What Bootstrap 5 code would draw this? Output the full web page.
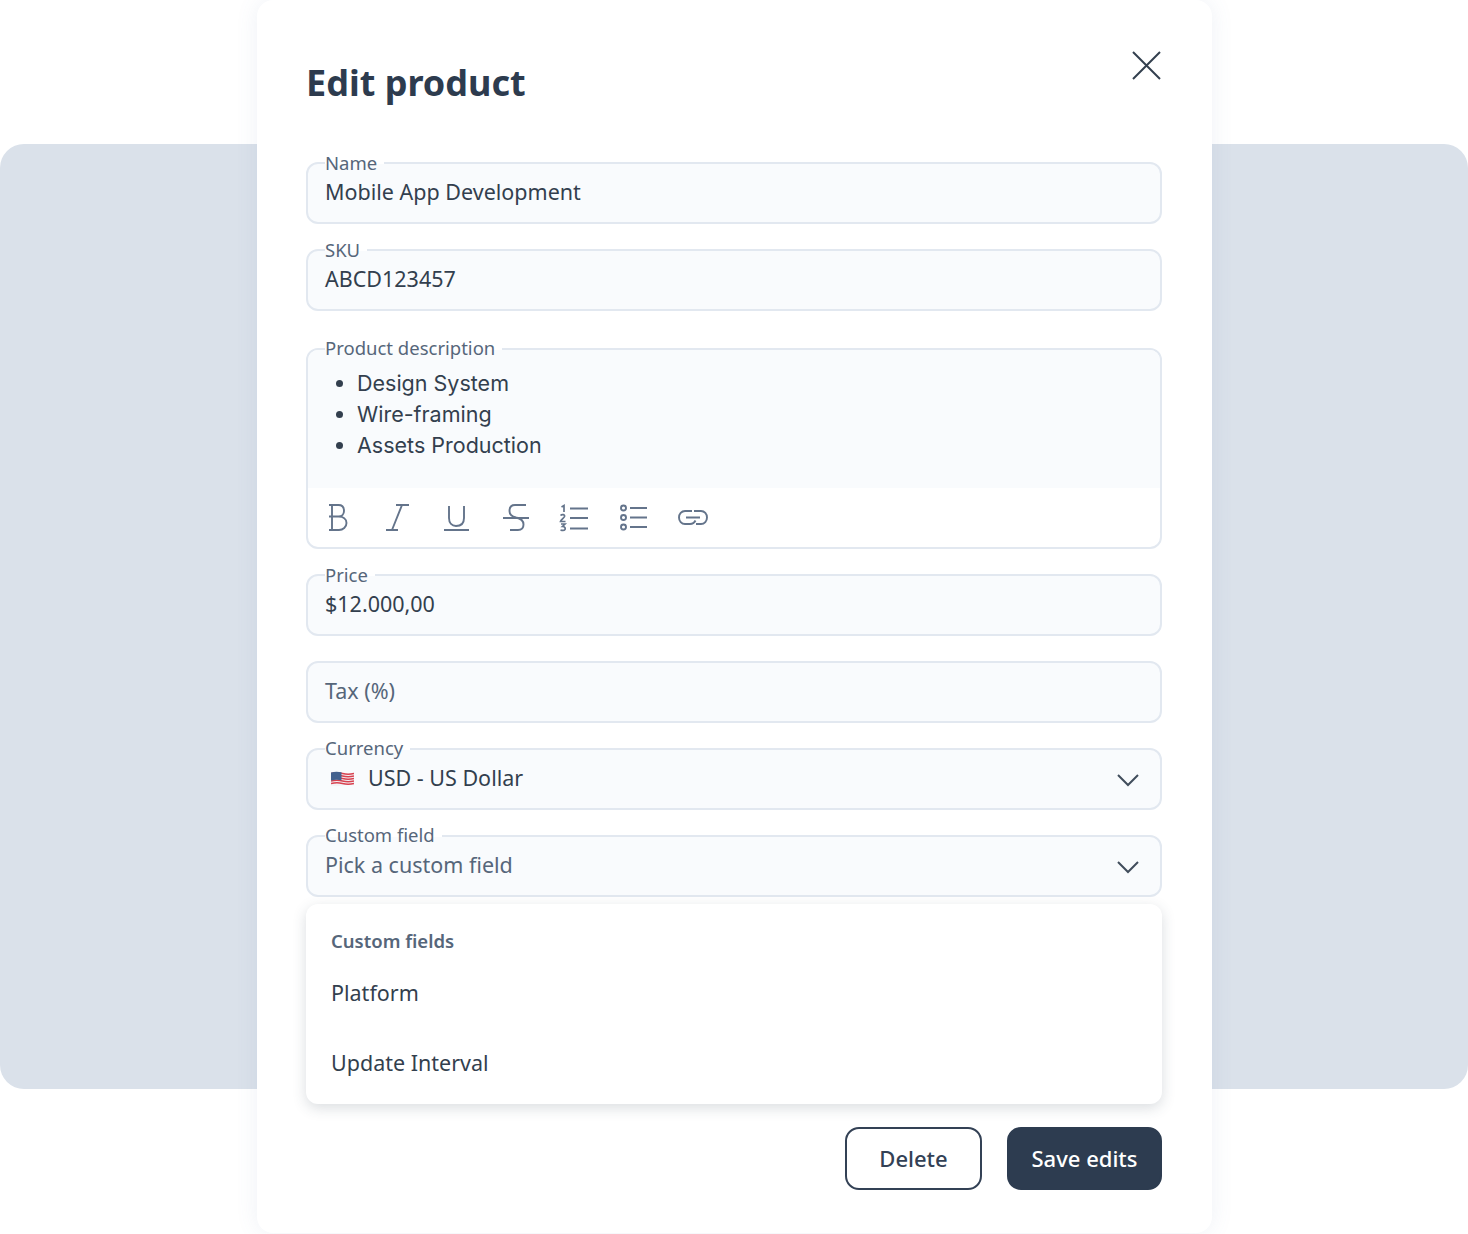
<!DOCTYPE html>
<html lang="en">

<head>
  <meta charset="utf-8">
  <meta name="viewport" content="width=device-width, initial-scale=1.0">
  <title>Edit product</title>
  <link href="https://cdn.jsdelivr.net/npm/bootstrap@5.3.3/dist/css/bootstrap.min.css" rel="stylesheet">
  <style>
    html, body {
      height: 1234px;
      overflow: hidden;
    }

    body {
      position: relative;
      background-color: #fff;
      color: #333f4e;
      font-family: "Noto Sans", sans-serif;
    }

    .backdrop-panel {
      position: absolute;
      left: 0;
      right: 0;
      top: 144px;
      height: 945px;
      background-color: #dae1ea;
      border-radius: 24px;
    }

    .edit-modal {
      position: relative;
      width: 955px;
      height: 1233px;
      margin-left: 257px;
      padding: 0 50px 0 49px;
      background-color: #fff;
      border-radius: 16px;
      box-shadow: 0 0 22px rgba(90, 120, 170, .1);
    }

    .modal-head {
      height: 162px;
      padding-top: 60px;
    }

    .modal-heading {
      margin: 0;
      color: #2d3b4e;
      font-size: 36px;
      line-height: 46px;
      font-weight: 700;
    }

    .close-btn {
      width: 30px;
      height: 30px;
      margin-top: -10px;
      padding: 0;
      border: 0;
      background: none;
      line-height: 0;
    }

    .field-box {
      position: relative;
      height: 62px;
      margin-bottom: 25px;
      padding: 0 20px 0 17px;
      background-color: #f9fbfd;
      border: 2px solid #e2e8f0;
      border-radius: 12px;
      font-size: 21.5px;
      color: #333f4e;
    }

    .field-box .field-value {
      line-height: 57px;
      margin-top: -1px;
    }

    .field-box.d-flex .field-value {
      margin-top: -3px;
    }

    .field-label {
      position: absolute;
      left: 17px;
      top: -12px;
      padding-right: 7px;
      font-size: 18.500px;
      line-height: 22px;
      color: #56667a;
      background: linear-gradient(#fff 0 12px, #f9fbfd 12px);
    }

    .desc-box .field-label,
    .field-box.d-flex .field-label {
      top: -13px;
      background: linear-gradient(#fff 0 13px, #f9fbfd 13px);
    }

    .muted-value {
      color: #56667a;
    }

    .chevron-icon {
      margin-top: 2px;
    }

    .desc-box {
      height: 201px;
      margin-top: 37px;
      padding: 0;
      background-color: #fff;
    }

    .desc-text {
      height: 138px;
      padding: 18px 0 0 49px;
      margin: 0;
      background-color: #f9fbfd;
      border-radius: 10px 10px 0 0;
      font-family: Inter, sans-serif;
      font-size: 21.500px;
      line-height: 31px;
    }

    .desc-tools {
      height: 59px;
      padding-left: 15px;
      gap: 30px;
    }

    .desc-tools svg {
      width: 29px;
      height: 29px;
      fill: none;
      stroke: #64748b;
      stroke-width: 1.900;
    }

    .desc-tools svg.link-icon {
      width: 32px;
    }

    .flag-icon {
      width: 23px;
      height: 16px;
      margin-left: 6px;
      margin-right: 14px;
    }

    .drop-box {
      position: relative;
      height: 200px;
      margin: -18px 0 23px;
      padding-top: 23px;
      padding-left: 25px;
      background-color: #fff;
      border-radius: 12px;
      box-shadow: 0 4px 14px rgba(51, 65, 85, .18);
    }

    .drop-title {
      height: 28px;
      font-size: 18.500px;
      line-height: 27px;
      font-weight: 600;
      color: #56667a;
    }

    .drop-item {
      height: 69px;
      padding-top: 23px;
      font-size: 21.500px;
      line-height: 30px;
      color: #333f4e;
    }

    .drop-item + .drop-item {
      padding-top: 24px;
    }

    .btn-delete,
    .btn-save {
      height: 63px;
      border-radius: 14px;
      font-size: 22px;
      font-weight: 500;
    }

    .btn-delete {
      width: 137px;
      margin-right: 25px;
      background: #fff;
      border: 2px solid #334155;
      color: #334155;
    }

    .btn-save {
      width: 155px;
      background: #2d3c50;
      border: 2px solid #2d3c50;
      color: #fff;
    }
  </style>
</head>

<body>
  <div class="backdrop-panel"></div>

  <div class="edit-modal">
    <div class="modal-head d-flex justify-content-between align-items-start">
      <h1 class="modal-heading">Edit product</h1>
      <button class="close-btn" type="button" aria-label="Close">
        <svg width="30" height="30" viewBox="0 0 30 30" fill="none" stroke="#333f4e" stroke-width="2">
          <path d="M1 2 28 29M28 2 1 29" />
        </svg>
      </button>
    </div>

    <div class="field-box">
      <span class="field-label">Name</span>
      <div class="field-value">Mobile App Development</div>
    </div>

    <div class="field-box">
      <span class="field-label">SKU</span>
      <div class="field-value">ABCD123457</div>
    </div>

    <div class="field-box desc-box">
      <span class="field-label">Product description</span>
      <ul class="desc-text">
        <li>Design System</li>
        <li>Wire-framing</li>
        <li>Assets Production</li>
      </ul>
      <div class="desc-tools d-flex align-items-center">
        <svg viewBox="0 0 29 29"><path d="M6 2H15.500C19.500 2 21 4.500 21 8C21 11 19 13.500 15.500 13.500H6M15.500 13.500C20 13.500 23.500 16 23.500 20C23.500 24 20 27 16 27H6M9 2V27" /></svg>
        <svg viewBox="0 0 29 29"><path d="M14 2H27M4 27H16M20 2 10 27" /></svg>
        <svg viewBox="0 0 29 29"><path d="M8 3V15C8 20 11 23 15 23C20 23 23 20 23 15V3M3 27H28" /></svg>
        <svg viewBox="0 0 29 29"><path d="M26 2H15C11 2 9.500 4.500 9.500 8C9.500 11.500 12 13.500 16 14.500C21 15.500 23.500 18 23.500 21.500C23.500 25 21.500 27 18 27H10M3 15H29" /></svg>
        <svg viewBox="0 0 29 29"><path d="M11 5.500H29M11 15H29M11 25.500H29" />
          <path stroke-width="1.700" d="M2.500 4 5 2.500V9M1.500 12.500C3 11 6 11.500 5.500 13.500C5 15 2 16.500 1.500 18.500H6.500M2 21H6L3.500 23.500C6 23.500 6.500 25 6 26.500C5 28 3 27.500 1.500 27" /></svg>
        <svg viewBox="0 0 29 29"><circle cx="5.500" cy="5" r="2.500" /><circle cx="5.500" cy="14.500" r="2.500" /><circle cx="5.500" cy="24" r="2.500" /><path d="M12 5H29M12 14.500H29M12 24H29" /></svg>
        <svg class="link-icon" viewBox="0 0 32 29"><path d="M15 8H8C4.500 8 2 11 2 14.500C2 18 4.500 21 8 21H13C15.500 21 17.500 19.500 18.500 17.500M17 8H24C27.500 8 30 11 30 14.500C30 18 27.500 21 24 21H19M9 14.500H23" /></svg>
      </div>
    </div>

    <div class="field-box">
      <span class="field-label">Price</span>
      <div class="field-value">$12.000,00</div>
    </div>

    <div class="field-box">
      <div class="field-value muted-value">Tax (%)</div>
    </div>

    <div class="field-box d-flex align-items-center justify-content-between">
      <span class="field-label">Currency</span>
      <div class="d-flex align-items-center">
        <svg class="flag-icon" viewBox="0 0 23 16">
          <path d="M0 1.500Q6 0 11.500 1.500T23 1.500V14.500Q17 13 11.500 14.500T0 14.500Z" fill="#f2f3f6" />
          <path d="M0 2.500Q6 1 11.500 2.500T23 2.500M0 5Q6 3.500 11.500 5T23 5M0 7.500Q6 6 11.500 7.500T23 7.500M0 10Q6 8.500 11.500 10T23 10M0 12.500Q6 11 11.500 12.500T23 12.500" fill="none" stroke="#d9414f" stroke-width="1.300" />
          <path d="M0 1.500Q5 0.300 10.500 1.300V9.300Q5 8.300 0 9.500Z" fill="#44628f" />
        </svg>
        <div class="field-value">USD - US Dollar</div>
      </div>
      <svg class="chevron-icon" width="24" height="14" viewBox="0 0 24 14" fill="none" stroke="#414d5c" stroke-width="2"><path d="M2 2 12 12 22 2" /></svg>
    </div>

    <div class="field-box d-flex align-items-center justify-content-between">
      <span class="field-label">Custom field</span>
      <div class="field-value muted-value">Pick a custom field</div>
      <svg class="chevron-icon" width="24" height="14" viewBox="0 0 24 14" fill="none" stroke="#414d5c" stroke-width="2"><path d="M2 2 12 12 22 2" /></svg>
    </div>

    <div class="drop-box">
      <div class="drop-title">Custom fields</div>
      <div class="drop-item">Platform</div>
      <div class="drop-item">Update Interval</div>
    </div>

    <div class="d-flex justify-content-end">
      <button class="btn btn-delete" type="button">Delete</button>
      <button class="btn btn-save" type="button">Save edits</button>
    </div>
  </div>

  <script src="https://cdn.jsdelivr.net/npm/bootstrap@5.3.3/dist/js/bootstrap.bundle.min.js"></script>
</body>

</html>
